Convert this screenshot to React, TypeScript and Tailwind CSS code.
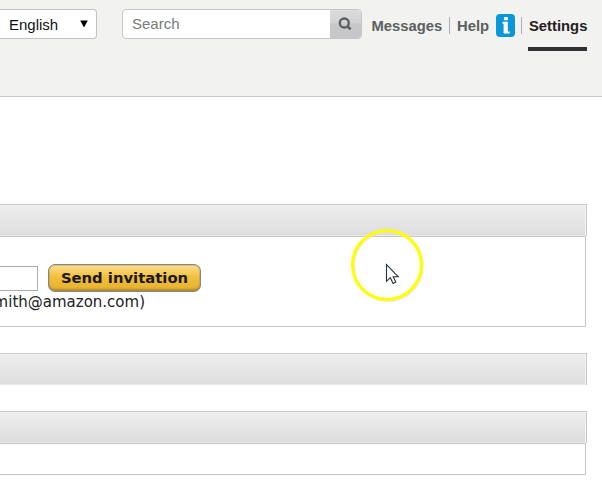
import type { ReactNode } from 'react';

function Header() {
  return (
    <header className="flex h-[97px] items-start border-b border-[#c8c8c8] bg-[#f2f2f0] font-['Liberation_Sans',Arial,sans-serif] text-[15px]">
      <div className="mt-[9px] flex h-[30px] w-[97px] items-center justify-between rounded-r-[4px] border border-l-0 border-[#c2c2c4] bg-white pl-[9px] pr-[8px] text-[#111]">
        <span className="leading-[17px]">English</span>
        <svg width="8" height="8" viewBox="0 0 8 8">
          <path d="M0.2 0.6h7.6L4 7.6z" fill="#000" />
        </svg>
      </div>
      <div className="ml-[25px] mt-[9px] flex h-[30px] w-[240px] overflow-hidden rounded-[4px] border border-[#c6c6c6] bg-white">
        <span className="flex-1 pl-[9px] leading-[28px] text-[#777b7b]">Search</span>
        <button className="flex w-[31px] justify-center bg-linear-to-b from-[#dcdcdc] from-0% via-[#d2d2d2] via-45% to-[#c7c7c9] to-50%">
          <svg width="14" height="14" viewBox="0 0 14 14" className="-ml-[2px] mt-[7px]" fill="none" stroke="#5a5e62">
            <circle cx="6.3" cy="6" r="4.5" strokeWidth="2.3" />
            <path d="M9.2 9l3.4 3.4" strokeWidth="2.6" />
          </svg>
        </button>
      </div>
      <nav className="ml-[9px] mt-[16px] flex h-[35px] text-[14.8px] font-bold text-[#5c6060]">
        <span className="w-[72px] pl-[0.5px] pt-[2px] leading-[17px]">Messages</span>
        <i className="ml-[6px] mt-px h-[17px] w-px bg-[#a7adba]" />
        <span className="ml-[7px] w-[39px] pt-[2px] leading-[17px]">Help</span>
        <svg width="19" height="23" viewBox="0 0 19 23" className="-mt-[2px]">
          <rect width="19" height="23" rx="4" fill="#0897d8" />
          <path d="M8 3h3.8v3.2H8zM6.5 7.8h5.3v9.6h1.9v2.2H7.6v-9.8H6.5z" fill="#fff" />
        </svg>
        <i className="ml-[6px] mt-px h-[17px] w-px bg-[#a7adba]" />
        <span className="ml-[6px] h-[35px] w-[59px] border-b-4 border-[#302f35] pl-px pt-[2px] leading-[17px] text-[#25211f]">Settings</span>
      </nav>
    </header>
  );
}

function Section({ className, children }: { className: string; children?: ReactNode }) {
  return (
    <section className={className}>
      <div className="h-[32px] w-[587px] border-r border-t border-[#c8c8c8] bg-linear-to-b from-[#eeeeee] to-[#dddddd] shadow-[inset_-1px_1px_0_#f3f3f3,inset_0_-1px_0_#e8e8e8]" />
      {children}
    </section>
  );
}

export default function App() {
  return (
    <main className="relative h-[498px] w-[602px] overflow-hidden bg-white">
      <Header />
      <Section className="mt-[107px]">
        <div className="h-[91px] w-[586px] border border-l-0 border-[#c8c8c8] pt-[27px] font-['DejaVu_Sans',Verdana,sans-serif] text-[15px]">
          <div className="flex h-[28px] items-start">
            <div className="mt-[2px] h-[25px] w-[38px] border border-l-0 border-[#a9abb0]" />
            <button className="ml-[10px] h-[28px] w-[153px] whitespace-nowrap rounded-[7px] border border-[#7c8791] bg-linear-to-b from-[#fde08c] from-0% via-[#f2c03c] via-45% to-[#e5b030] to-100% text-[14.8px] leading-[26px] font-bold text-[#1c1717] shadow-[inset_0_0_0_1px_#b98f3066,inset_0_-3px_2px_-1px_#b5872a]">
              Send invitation
            </button>
          </div>
          <p className="flex w-[145px] justify-end whitespace-nowrap leading-[20px] text-[#222]">mith@amazon.com)</p>
        </div>
      </Section>
      <Section className="mt-[26px]" />
      <Section className="mt-[26px]">
        <div className="h-[32px] w-[586px] border border-l-0 border-[#c8c8c8]" />
      </Section>
      <svg className="absolute left-[348px] top-[226px]" width="80" height="80" viewBox="0 0 80 80" fill="none">
        <circle cx="40" cy="40" r="34.5" stroke="#dedee8" strokeWidth="3" opacity=".6" />
        <circle cx="39" cy="39" r="34.4" stroke="#ffff00" strokeWidth="3.2" />
        <path d="M38.5 38.5v16.8l3.8-3.6 2.8 5.7 2.7-1.3-2.6-5.4h5z" fill="#fff" stroke="#26303c" strokeWidth="1.1" />
      </svg>
    </main>
  );
}
